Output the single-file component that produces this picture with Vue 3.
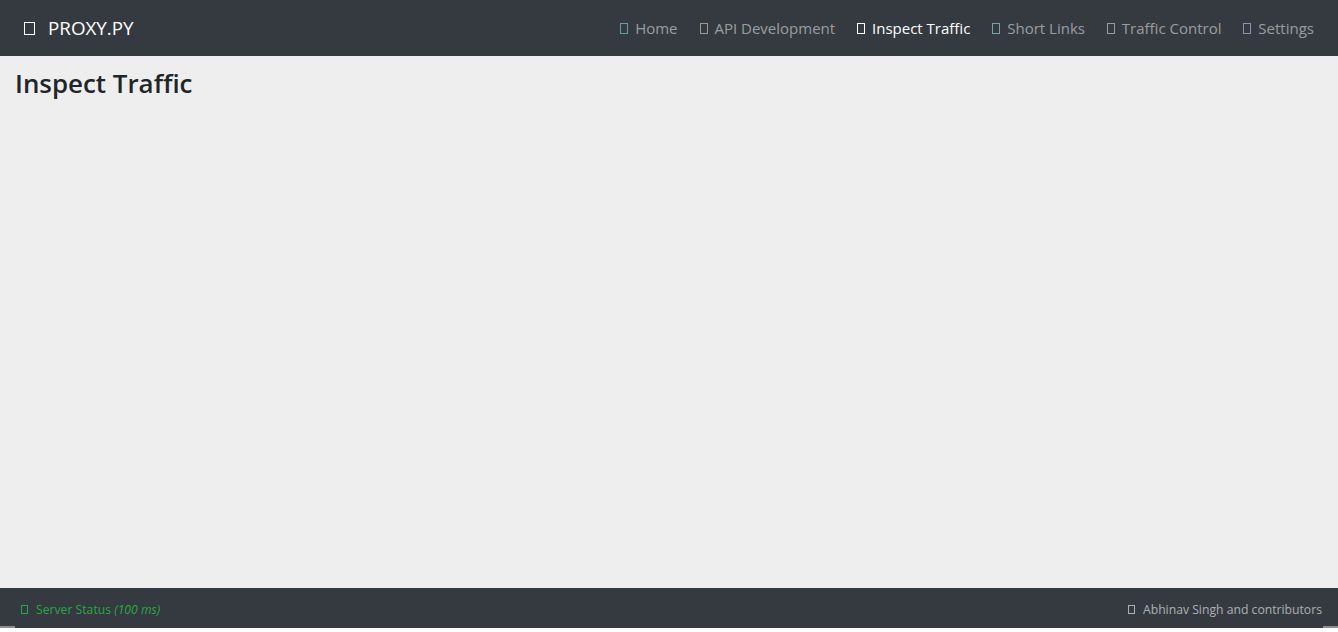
<template>
  <div class="page">
    <nav class="navbar">
      <a class="brand">
        <span class="tofu brand-icon"></span>
        <span>PROXY.PY</span>
      </a>
      <ul class="links">
        <li v-for="link in links" :key="link.name" :class="{ active: link.name === current }">
          <span class="tofu" :style="{ color: link.color }"></span>
          {{ link.name }}
        </li>
      </ul>
    </nav>

    <main class="content">
      <h1>{{ current }}</h1>
    </main>

    <footer class="status">
      <div class="server">
        <span class="tofu small"></span>
        <span>Server Status <i>(100 ms)</i></span>
      </div>
      <div class="credits">
        <span class="tofu small"></span>
        <span>Abhinav Singh and contributors</span>
      </div>
    </footer>
  </div>
</template>

<script setup>
const current = 'Inspect Traffic'

// icon font is missing in the screenshot, so the glyphs show up as empty boxes
const links = [
  { name: 'Home', color: '#6f99a6' },
  { name: 'API Development', color: '#9a9a8e' },
  { name: 'Inspect Traffic', color: '#ffffff' },
  { name: 'Short Links', color: '#7f9fa8' },
  { name: 'Traffic Control', color: '#9a9aa2' },
  { name: 'Settings', color: '#8f8fae' },
]
</script>

<style>
html, body {
  margin: 0;
  background: #fff;
}
</style>

<style scoped>
.page {
  display: flex;
  flex-direction: column;
  height: 628px;
  font-family: "Open Sans", "Noto Sans", sans-serif;
  background: #eee;
}

.navbar {
  display: flex;
  align-items: center;
  justify-content: space-between;
  height: 56px;
  padding: 0 16px;
  background: #343a40;
  flex: none;
}

.brand {
  display: flex;
  align-items: center;
  gap: 13px;
  margin-left: 8px;
  font-size: 18.8px;
  color: #fff;
}

.links {
  display: flex;
  gap: 6px;
  margin: 0;
  padding: 0;
  list-style: none;
  font-size: 15px;
  color: rgba(255, 255, 255, 0.5);
}

.links li {
  padding: 0 8px;
  white-space: nowrap;
}

.links li.active {
  color: #fff;
}

.tofu {
  display: inline-block;
  width: 6px;
  height: 9px;
  margin-right: 3px;
  border: 1px solid currentColor;
}

.brand .brand-icon {
  width: 9px;
  height: 11px;
  margin-right: 0;
  color: #fff;
}

.content {
  flex: 1;
  padding: 8px 15px;
}

h1 {
  margin: 0;
  font-size: 25.9px;
  font-weight: 600;
  line-height: 1.5;
  color: #212529;
}

.status {
  position: relative;
  display: flex;
  align-items: center;
  justify-content: space-between;
  height: 40px;
  padding: 2px 16px 0 21px;
  box-sizing: border-box;
  background: #343a40;
  font-size: 12.2px;
  flex: none;
}

/* the little grey slivers at both bottom corners */
.status::before,
.status::after {
  content: "";
  position: absolute;
  bottom: 0;
  width: 15px;
  height: 2px;
  background: #8a8d90;
}

.status::before {
  left: 0;
}

.status::after {
  right: 0;
}

.server {
  color: #28a745;
}

.credits {
  color: rgba(255, 255, 255, 0.6);
}

.status .small {
  width: 5px;
  height: 7px;
  margin-right: 8px;
}
</style>
